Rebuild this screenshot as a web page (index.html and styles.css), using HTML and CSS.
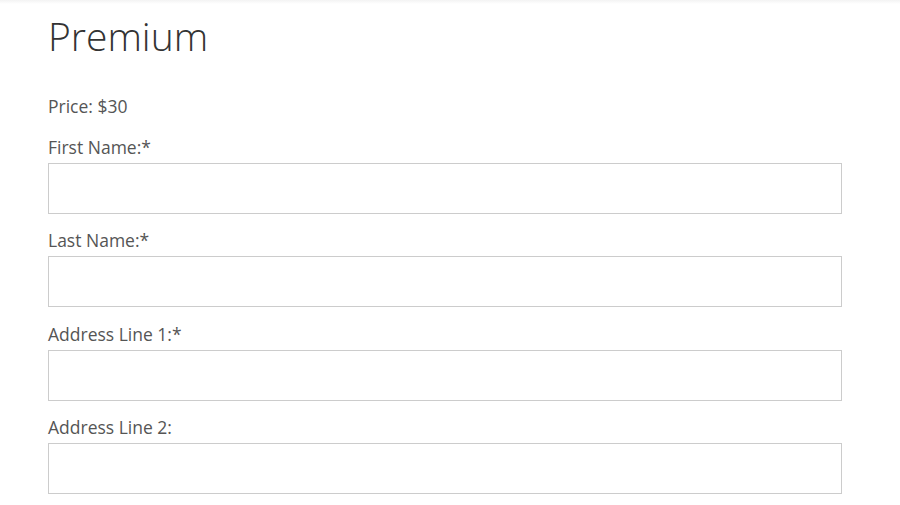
FILE: index.html
```html
<!DOCTYPE html>
<html>
<head>
<meta charset="utf-8">
<link rel="stylesheet" href="styles.css">
</head>
<body>
<div class="topbar"></div>
<main class="page">
  <h1 class="title">Premium</h1>
  <p class="price">Price: $30</p>
  <form class="form">
    <div class="field">
      <label class="label">First Name:*</label>
      <input class="input" type="text">
    </div>
    <div class="field">
      <label class="label">Last Name:*</label>
      <input class="input" type="text">
    </div>
    <div class="field">
      <label class="label">Address Line 1:*</label>
      <input class="input" type="text">
    </div>
    <div class="field">
      <label class="label">Address Line 2:</label>
      <input class="input" type="text">
    </div>
  </form>
</main>
</body>
</html>
```
FILE: styles.css
```css
html, body {
  margin: 0;
  padding: 0;
  background: #fff;
  font-family: "Open Sans", "Liberation Sans", sans-serif;
  color: #555;
}
.topbar {
  height: 4px;
  background: linear-gradient(#f3f3f3, #fff);
}
.page {
  padding: 0 58px 0 48px;
}
.title {
  margin: 8px 0 0;
  font-size: 39px;
  font-weight: 330;
  line-height: 48px;
  color: #333;
}
.price {
  margin: 33px 0 0;
  font-size: 17.5px;
  line-height: 26px;
}
.form {
  display: flex;
  flex-direction: column;
  gap: 13.33px;
  margin-top: 15px;
}
.field {
  display: flex;
  flex-direction: column;
}
.label {
  font-size: 17.5px;
  line-height: 26px;
  color: #555;
  margin-bottom: 3px;
}
.input {
  box-sizing: border-box;
  height: 51px;
  width: 794px;
  border: 1px solid #ccc;
  border-radius: 0;
  margin: 0;
  padding: 6px 12px;
  font-family: inherit;
  font-size: 16px;
  background: #fff;
  outline: none;
}
```
